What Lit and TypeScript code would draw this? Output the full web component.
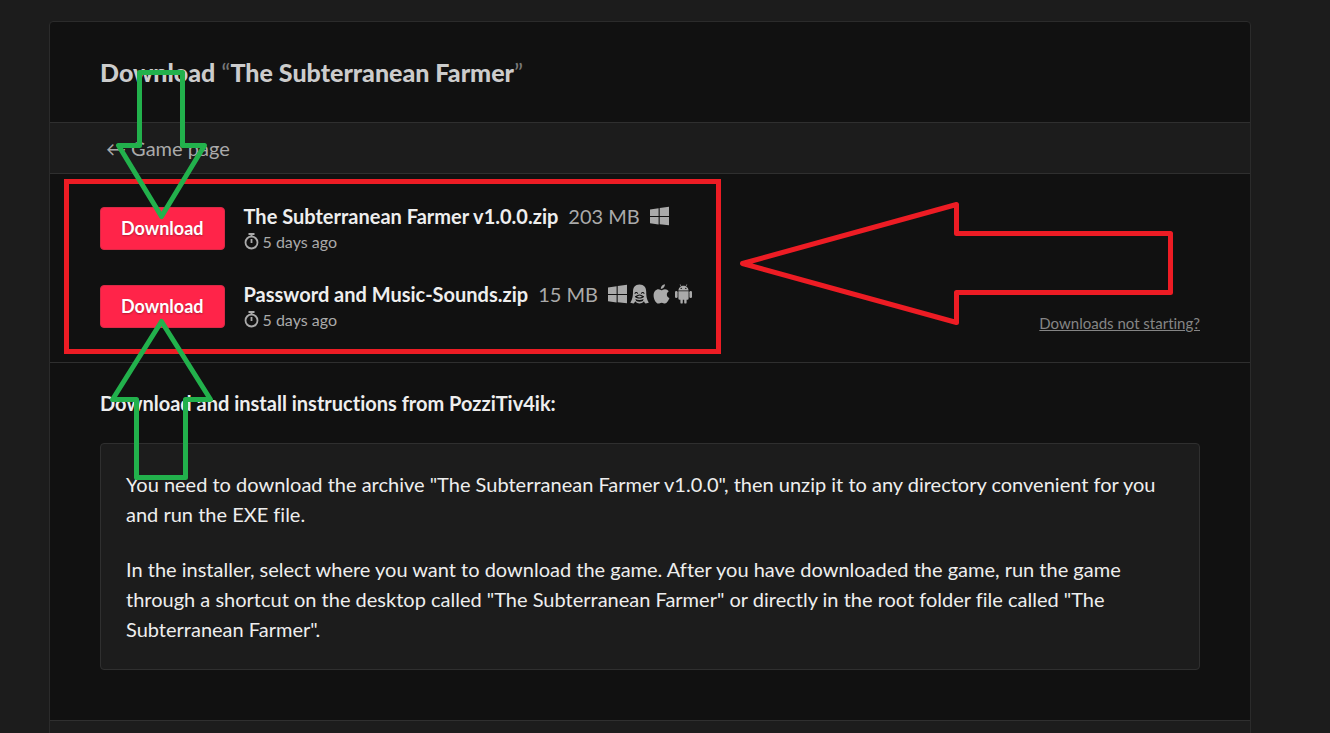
import { LitElement, html, css, svg } from "lit";
import { customElement, property } from "lit/decorators.js";

const platformShapes = {
  windows: svg`<path d="M0 3.6 8.6 2.3V10H0ZM9.7 2.1 19 0.8V10H9.7ZM0 11H8.6V18.4L0 17.2ZM9.7 11H19V19.2L9.7 18.2Z"/>`,
  linux: svg`<path fill-rule="evenodd" d="M9.5 0.5C5 0.5 3 3.6 3 7.6C3 12 2.6 15 0.3 18.8L3.5 19.4C4.6 18.6 5 18 5.2 17.2C6.4 18.8 8 19.4 9.5 19.4S12.8 18.8 14 17.2C14.2 18 14.6 18.8 15.6 19.4L18.8 18.8C16.5 15 16.2 12 16.2 7.6C16.2 3.6 14 0.5 9.5 0.5ZM4.4 9.8C4.6 7.6 7.8 7.4 8.2 9.8H7.2C6.9 8.7 5.8 8.7 5.4 9.8ZM10.8 9.8C11.2 7.4 14.4 7.6 14.6 9.8H13.6C13.2 8.7 12.1 8.7 11.8 9.8ZM4.8 12.2C6.4 12.4 7.6 10.6 9.5 10.6S12.6 12.4 14.2 12.2C13.6 14 11.4 14.6 9.5 14.6S5.4 14 4.8 12.2ZM6.6 12.7C8.4 13.6 10.6 13.6 12.4 12.7C11 12.6 10.6 11.6 9.5 11.6S8 12.6 6.6 12.7ZM5.4 15C8 16.2 11 16.2 13.6 15L12.8 16.9C11 18 8 18 6.2 16.9Z"/>`,
  apple: svg`<path d="M12.9 0.3C13 2.8 11.2 5 8.8 5C8.6 2.7 10.6 0.6 12.9 0.3ZM9.4 6.3C10.2 6.3 11.2 5.2 13 5.2C14.4 5.2 15.9 5.9 16.8 7.2C13.9 8.9 14.4 12.9 17.4 14.1C16.6 16.4 14.9 19.5 13 19.5C11.7 19.5 11.2 18.7 9.7 18.7C8.2 18.7 7.6 19.5 6.3 19.5C4 19.5 1.6 15.2 1.6 11.4C1.6 7.4 4.1 5.3 6.4 5.3C7.8 5.3 8.8 6.3 9.4 6.3Z"/>`,
  android: svg`<path fill-rule="evenodd" d="M4.4 6.4C4.5 4.6 5.5 3.3 6.9 2.5L5.7 0.6L6.2 0.3L7.5 2.2C8.7 1.7 10.3 1.7 11.5 2.2L12.8 0.3L13.3 0.6L12.1 2.5C13.5 3.3 14.5 4.6 14.6 6.4ZM7.2 3.7A.7.7 0 1 0 7.2 5.1A.7.7 0 1 0 7.2 3.7ZM11.8 3.7A.7.7 0 1 0 11.8 5.1A.7.7 0 1 0 11.8 3.7Z"/><path d="M4.4 7.2H14.6V14.6Q14.6 15.8 13.4 15.8H12.6V18.4A1.2 1.2 0 0 1 10.2 18.4V15.8H8.8V18.4A1.2 1.2 0 0 1 6.4 18.4V15.8H5.6Q4.4 15.8 4.4 14.6Z"/><rect x="1" y="7" width="2.6" height="7" rx="1.3"/><rect x="15.4" y="7" width="2.6" height="7" rx="1.3"/>`,
};

type Platform = keyof typeof platformShapes;

interface Upload {
  name: string;
  size: string;
  age: string;
  platforms: Platform[];
}

const uploads: Upload[] = [
  { name: "The Subterranean Farmer v1.0.0.zip", size: "203 MB", age: "5 days ago", platforms: ["windows"] },
  { name: "Password and Music-Sounds.zip", size: "15 MB", age: "5 days ago", platforms: ["windows", "linux", "apple", "android"] },
];

@customElement("upload-row")
export class UploadRow extends LitElement {
  @property({ attribute: false }) upload!: Upload;

  static styles = css`
    :host { display: flex; align-items: flex-start; gap: 19px; }
    .download {
      box-sizing: border-box;
      height: 43px;
      margin-top: 3px;
      padding: 0 20px 2px;
      border: 1px solid #d92945;
      border-radius: 4px;
      background: #ff2449;
      color: #fff;
      font: 700 18px/36px Lato, sans-serif;
      text-shadow: 0 1px 2px rgba(0, 0, 0, 0.3);
      cursor: pointer;
    }
    .title { display: flex; align-items: center; line-height: 24px; font-size: 20px; }
    .name { color: #eee; font-weight: 700; }
    .size { margin-left: 10px; color: #aaa; }
    .platforms { display: flex; gap: 3px; margin-left: 10px; }
    .icon { display: block; width: 19px; height: 20px; fill: #aaa; }
    .age { display: flex; align-items: center; gap: 4px; margin-top: 2px; color: #aaa; font-size: 16px; line-height: 24px; }
    .watch { width: 15px; height: 18px; fill: none; stroke: #aaa; stroke-width: 1.8; }
  `;

  render() {
    const u = this.upload;
    return html`
      <button class="download" type="button" aria-label="Download ${u.name}">Download</button>
      <div>
        <div class="title">
          <span class="name">${u.name}</span>
          <span class="size">${u.size}</span>
          <span class="platforms">
            ${u.platforms.map((p) => html`<svg class="icon" viewBox="0 0 19 20" role="img" aria-label=${p}>${platformShapes[p]}</svg>`)}
          </span>
        </div>
        <div class="age">
          <svg class="watch" viewBox="0 0 15 18" aria-hidden="true">
            <circle cx="7.500" cy="9.500" r="6"/><path d="M7.500 6V10M4.500 1H10.500M7.500 1V4"/>
          </svg>
          <span>${u.age}</span>
        </div>
      </div>
    `;
  }
}

@customElement("app-root")
export class AppRoot extends LitElement {
  static styles = css`
    :host {
      display: block;
      position: relative;
      box-sizing: border-box;
      min-height: 100vh;
      max-height: 100vh;
      overflow: hidden;
      padding: 21px 30px 0 0;
      background: #1c1c1c;
      color: #eee;
      font: 20px/30px Lato, sans-serif;
      font-variant-ligatures: none;
    }
    .card {
      box-sizing: border-box;
      max-width: 1202px;
      margin: 0 auto;
      border: 1px solid #2b2b2b;
      border-radius: 4px;
      background: #111;
    }
    .header { padding: 35px 50px; border-bottom: 1px solid #2f2f2f; }
    .heading { margin: 0; color: #ccc; font-size: 25px; font-weight: 900; line-height: 30px; }
    .quote { color: #777; font-weight: 400; }
    .nav { padding: 10px 56px; border-bottom: 1px solid #2f2f2f; background: #1c1c1c; }
    .back { color: #aaa; text-decoration: none; }
    .uploads {
      display: flex;
      justify-content: space-between;
      align-items: flex-end;
      padding: 30px 50px;
      border-bottom: 1px solid #2f2f2f;
    }
    .list { display: grid; gap: 28px; }
    .help { color: #858585; font-size: 15px; line-height: 18px; }
    .instructions { padding: 25px 50px 50px; }
    .subheading { margin: 0 0 25px; font-size: 20px; font-weight: 700; line-height: 30px; }
    .note { padding: 25px; border: 1px solid #2f2f2f; border-radius: 4px; background: #1c1c1c; }
    .text { margin: 0; }
    .text + .text { margin-top: 25px; }
    .footer { height: 40px; border-top: 1px solid #2f2f2f; background: #1c1c1c; }
    .marks {
      position: absolute;
      top: 0;
      left: 0;
      width: 1330px;
      height: 733px;
      fill: none;
      stroke-width: 5;
      stroke-linejoin: round;
      pointer-events: none;
    }
    .red { stroke: #ed1c24; }
    .green { stroke: #22b14c; }
    .frame { stroke-linejoin: miter; }
  `;

  render() {
    return html`
      <main class="card">
        <header class="header">
          <h1 class="heading">Download <span class="quote">“</span>The Subterranean Farmer<span class="quote">”</span></h1>
        </header>
        <nav class="nav"><a class="back" href="#game">← Game page</a></nav>
        <section class="uploads">
          <div class="list">${uploads.map((u) => html`<upload-row .upload=${u}></upload-row>`)}</div>
          <a class="help" href="#help">Downloads not starting?</a>
        </section>
        <section class="instructions">
          <h2 class="subheading">Download and install instructions from PozziTiv4ik:</h2>
          <div class="note">
            <p class="text">You need to download the archive "The Subterranean Farmer v1.0.0", then unzip it to any directory convenient for you and run the EXE file.</p>
            <p class="text">In the installer, select where you want to download the game. After you have downloaded the game, run the game through a shortcut on the desktop called "The Subterranean Farmer" or directly in the root folder file called "The Subterranean Farmer".</p>
          </div>
        </section>
        <footer class="footer"></footer>
      </main>
      <svg class="marks" viewBox="0 0 1330 733" aria-hidden="true">
        <path class="red frame" d="M66.500 181.500H718.500V351.500H66.500Z"/>
        <path class="red" d="M742.500 263.500 956.500 204.500V233.500H1170.500V292.500H956.500V322.500Z"/>
        <path class="green" d="M139.500 72.500H182.500V145.500H204.500L161.500 216.500L118.500 145.500H139.500Z"/>
        <path class="green" d="M161.500 321.500 210.500 399.500H185.500V477.500H136.500V399.500H112.500Z"/>
      </svg>
    `;
  }
}
